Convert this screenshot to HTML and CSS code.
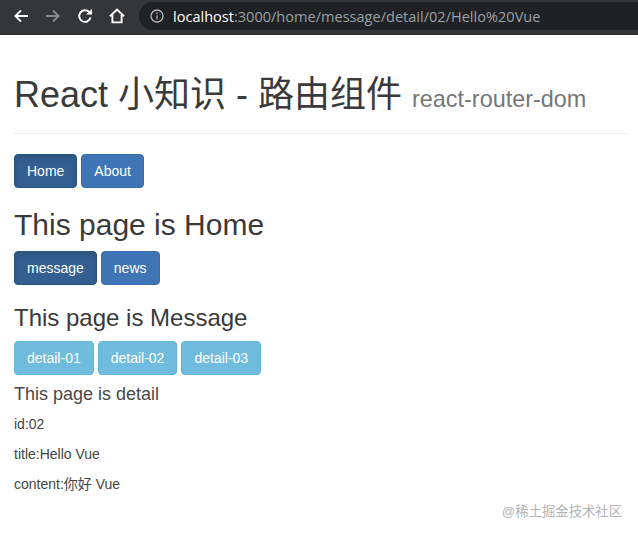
FILE: index.html
```html
<!DOCTYPE html>
<html lang="zh">
<head>
<meta charset="utf-8">
<title>React 小知识</title>
<link rel="stylesheet" href="styles.css">
</head>
<body>
<header class="toolbar">
  <svg class="ico ico-back" viewBox="0 0 16 16"><path d="M15 8H2.5M8 2.4 2.4 8 8 13.6"/></svg>
  <svg class="ico ico-fwd" viewBox="0 0 16 16"><path d="M1 8h12.5M8 2.4 13.6 8 8 13.6"/></svg>
  <svg class="ico ico-reload" viewBox="0 0 16 16"><path d="M13.6 9.6A5.8 5.8 0 1 1 12.2 4"/><path class="fill" d="M9.2 6.6h5.8V.8z"/></svg>
  <svg class="ico ico-home" viewBox="0 0 16 16"><path d="M1 8.2 8 1.6l7 6.6M3.4 7v7.4h9.2V7"/></svg>
  <div class="omnibox">
    <svg class="info" viewBox="0 0 14 14"><circle cx="7" cy="7" r="6"/><path d="M7 6.2v4M7 3.6v1.4"/></svg>
    <span class="url"><b class="host">localhost</b>:3000/home/message/detail/02/Hello%20Vue</span>
  </div>
</header>
<main class="page">
  <div class="page-header">
    <h1>React 小知识 - 路由组件 <small>react-router-dom</small></h1>
  </div>
  <nav class="btn-row">
    <a class="btn btn-primary active">Home</a>
    <a class="btn btn-primary">About</a>
  </nav>
  <h2>This page is Home</h2>
  <nav class="btn-row">
    <a class="btn btn-primary active">message</a>
    <a class="btn btn-primary">news</a>
  </nav>
  <h3>This page is Message</h3>
  <nav class="btn-row">
    <a class="btn btn-info">detail-01</a>
    <a class="btn btn-info">detail-02</a>
    <a class="btn btn-info">detail-03</a>
  </nav>
  <h4>This page is detail</h4>
  <p>id:02</p>
  <p>title:Hello Vue</p>
  <p>content:你好 Vue</p>
</main>
<div class="watermark">@稀土掘金技术社区</div>
</body>
</html>
```
FILE: styles.css
```css
* { box-sizing: border-box; }
html, body { margin: 0; height: 100%; overflow: hidden; }
body {
  background: #fff;
  color: #444;
  font: 14px/20px "Liberation Sans", "Noto Sans CJK SC", sans-serif;
  position: relative;
}
.toolbar {
  height: 35px;
  background: #35363a;
  border-bottom: 1px solid #2a2b2d;
  display: flex;
  align-items: flex-start;
  padding-top: 8px;
  padding-left: 13px;
}
.ico { width: 16px; height: 16px; flex: none; fill: none; stroke: #fff; stroke-width: 1.9; margin-right: 16px; }
.ico .fill { fill: #fff; stroke: none; }
.ico-fwd { stroke: #8a8b8d; }
.ico-home { margin-right: 14px; }
.omnibox {
  margin-top: -6px;
  flex: 1;
  height: 28px;
  background: #202124;
  border-radius: 14px 0 0 14px;
  display: flex;
  align-items: center;
  padding-left: 11px;
}
.info { width: 14px; height: 14px; fill: none; stroke: #b5b6b8; stroke-width: 1.3; flex: none; }
.url { margin-left: 9px; color: #9aa0a6; font: 14.55px "Open Sans", "Liberation Sans", sans-serif; white-space: nowrap; }
.host { color: #fff; font-weight: 400; }
.page { padding: 0 10px 0 14px; }
.page-header { margin: 40px 0 20px; padding-bottom: 8px; border-bottom: 1px solid #eee; }
h1, h2, h3, h4 { font-weight: 400; line-height: 1.1; margin: 20px 0 10px; color: #3a3a3a; }
h1 { font-size: 36px; margin: 0 0 10px; }
h1 small { font-size: 65%; font-weight: 400; line-height: 1; color: #777; }
h2 { font-size: 30px; }
h3 { font-size: 24px; }
h4 { font-size: 18px; margin-top: 10px; margin-bottom: 9px; color: #484848; }
p { margin: 0 0 10px; }
.btn-row { display: flex; gap: 4px; }
.btn {
  display: block;
  height: 34px;
  padding: 6px 12px;
  border: 1px solid transparent;
  border-radius: 4px;
  color: #fff;
  font-size: 14px;
  line-height: 20px;
}
.btn-primary { background: #3f75b4; border-color: #3a6ea8; }
.btn-primary.active { background: #335f91; border-color: #2b5480; box-shadow: inset 0 3px 5px rgba(0,0,0,.125); }
.btn-info { background: #6fbcde; border-color: #5fb3d6; }
.watermark {
  position: absolute;
  right: 16px;
  top: 502px;
  color: #b4b4b4;
  font-size: 13.33px;
  line-height: 20px;
}
```
